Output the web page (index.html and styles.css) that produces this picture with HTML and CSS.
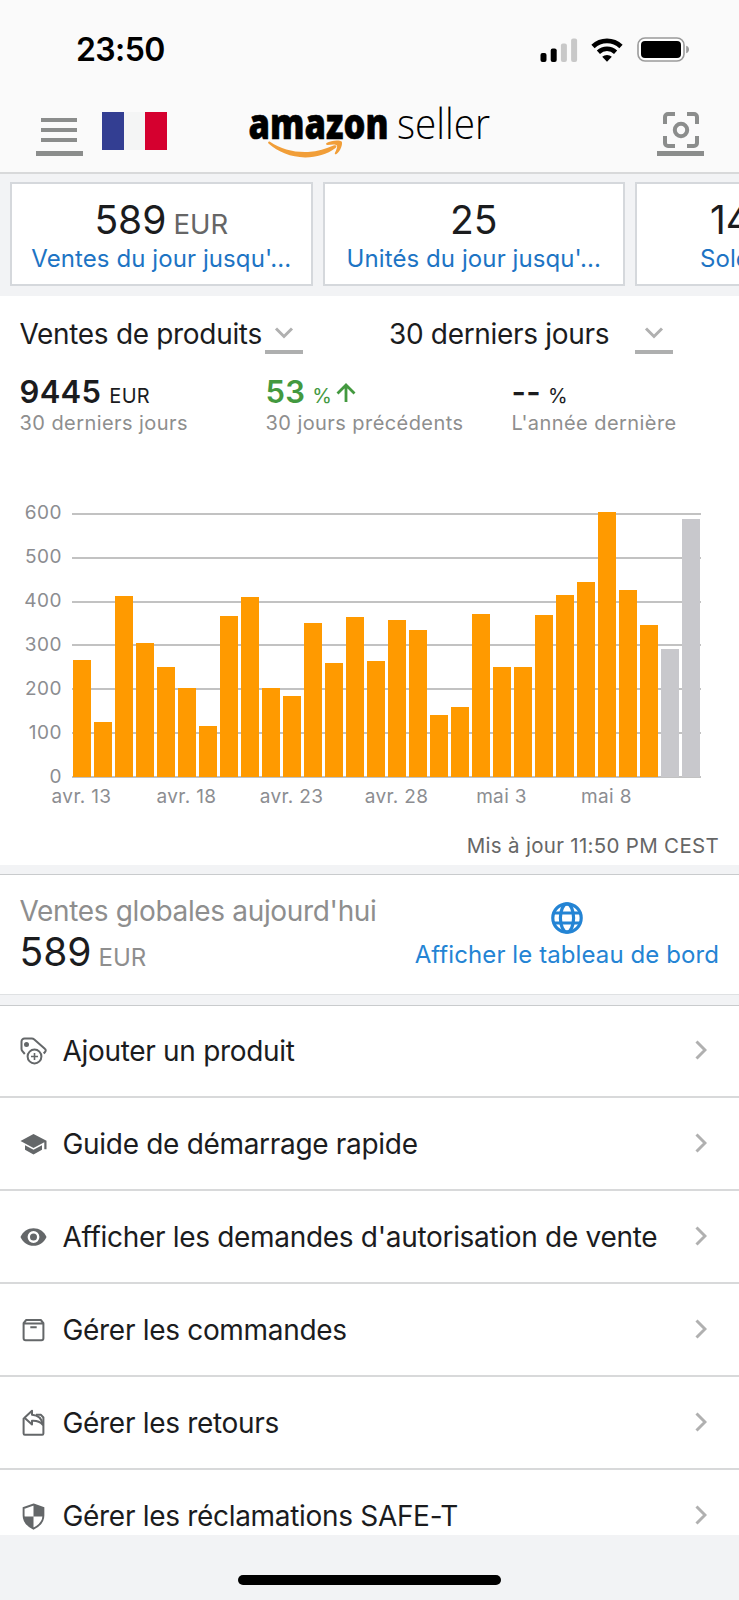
FILE: index.html
```html
<!DOCTYPE html>
<html lang="fr">
<head>
    <meta charset="UTF-8">
    <title>Amazon Seller</title>
    <link rel="stylesheet" href="styles.css">
</head>
<body>
    <div class="status-bar">
        <span class="time">23:50</span>
        <div class="status-icons">
            <svg class="signal" width="38" height="24" viewBox="0 0 38 24">
                <rect x="0.5" y="15" width="6" height="9" rx="2"/>
                <rect x="10.7" y="10.5" width="6" height="13.5" rx="2"/>
                <rect class="off" x="20.9" y="5.5" width="6" height="18.5" rx="2"/>
                <rect class="off" x="31.1" y="0.5" width="6" height="23.5" rx="2"/>
            </svg>
            <svg class="wifi" width="32" height="24" viewBox="0 0 32 24">
                <path d="M2 8.4a20.5 20.5 0 0 1 28 0" fill="none" stroke="#000" stroke-width="4.8"/>
                <path d="M7.4 14.2a12.6 12.6 0 0 1 17.2 0" fill="none" stroke="#000" stroke-width="4.6"/>
                <path d="M16 23.8l-4.8-5a7 7 0 0 1 9.6 0z"/>
            </svg>
            <svg class="battery" width="53" height="25" viewBox="0 0 53 25">
                <rect x="1" y="1" width="46" height="23" rx="7" fill="#fff" stroke="#9b9b9b" stroke-width="1.6"/>
                <rect x="4" y="4" width="40" height="17" rx="4"/>
                <path d="M49.2 8.8c1.8.5 2.8 1.9 2.8 3.7s-1 3.2-2.8 3.7z" fill="#9b9b9b"/>
            </svg>
        </div>
    </div>

    <header class="header">
        <div class="menu">
            <i></i>
            <i></i>
            <i></i>
        </div>
        <div class="flag">
            <i class="blue"></i>
            <i class="white"></i>
            <i class="red"></i>
        </div>
        <svg class="logo" width="244" height="60" viewBox="0 0 244 60">
            <text class="logo-amazon" x="0.5" y="39" textLength="140" lengthAdjust="spacingAndGlyphs">amazon</text>
            <text class="logo-seller" x="149" y="39" textLength="93" lengthAdjust="spacingAndGlyphs">seller</text>
            <path d="M22 41.8C33 49.2 46 52.6 60 52C70 51.4 78 48.8 85.5 45.5C88 44.4 89.5 46.5 87.5 48C79 54.500 68 57.500 57 57.400C43 57.200 30 52 20.500 43.500C19.500 42.500 20.500 40.900 22 41.800Z" fill="#f19e38"/>
            <path d="M78.5 43C83 40 92 39.700 93.700 41.500C95 44 92.500 51 88.500 54C87.300 54.800 86.400 54.200 87 52.800C88.300 50 89.800 46.500 88.800 45.400C87.500 44 83.500 44.500 79.500 45C78.200 45.100 77.600 43.800 78.500 43Z" fill="#f19e38"/>
        </svg>
        <div class="scan">
            <svg width="36" height="36" viewBox="0 0 36 36" fill="none" stroke="#8b8d8c" stroke-width="4">
                <path d="M2 12V5a3 3 0 0 1 3-3h7M24 2h7a3 3 0 0 1 3 3v7M34 24v7a3 3 0 0 1-3 3h-7M12 34H5a3 3 0 0 1-3-3v-7"/>
                <circle cx="18" cy="18" r="6.2"/>
            </svg>
        </div>
    </header>

    <section class="cards">
        <div class="card">
            <p class="card-value">589 <small>EUR</small></p>
            <p class="card-label">Ventes du jour jusqu'...</p>
        </div>
        <div class="card">
            <p class="card-value">25</p>
            <p class="card-label">Unités du jour jusqu'...</p>
        </div>
        <div class="card cut">
            <p class="card-value">14</p>
            <p class="card-label">Solde</p>
        </div>
    </section>

    <section class="sales">
        <div class="selectors">
            <div class="selector">
                <span>Ventes de produits</span>
                <div class="arrow">
                    <svg width="20" height="12" viewBox="0 0 20 12"><path d="M2 1.5l8 8 8-8"/></svg>
                </div>
            </div>
            <div class="selector">
                <span>30 derniers jours</span>
                <div class="arrow">
                    <svg width="20" height="12" viewBox="0 0 20 12"><path d="M2 1.5l8 8 8-8"/></svg>
                </div>
            </div>
        </div>

        <div class="metrics">
            <div class="metric">
                <p class="metric-value">9445 <small>EUR</small></p>
                <p class="metric-label">30 derniers jours</p>
            </div>
            <div class="metric">
                <p class="metric-value up">53 <small>%</small>
                    <svg width="20" height="20" viewBox="0 0 20 20"><path d="M10 19V2M1.5 10.5L10 2l8.5 8.5"/></svg>
                </p>
                <p class="metric-label">30 jours précédents</p>
            </div>
            <div class="metric">
                <p class="metric-value dashes">-- <small>%</small></p>
                <p class="metric-label">L'année dernière</p>
            </div>
        </div>

        <div class="chart">
            <div class="y-axis">
                <span>600</span>
                <span>500</span>
                <span>400</span>
                <span>300</span>
                <span>200</span>
                <span>100</span>
                <span>0</span>
            </div>
            <div class="plot">
                <div class="grid-lines">
                    <i></i><i></i><i></i><i></i><i></i><i></i><i></i>
                </div>
                <div class="bars">
                    <i style="height: 117px"></i>
                    <i style="height: 55px"></i>
                    <i style="height: 181px"></i>
                    <i style="height: 134px"></i>
                    <i style="height: 110px"></i>
                    <i style="height: 89px"></i>
                    <i style="height: 51px"></i>
                    <i style="height: 161px"></i>
                    <i style="height: 180px"></i>
                    <i style="height: 89px"></i>
                    <i style="height: 81px"></i>
                    <i style="height: 154px"></i>
                    <i style="height: 114px"></i>
                    <i style="height: 160px"></i>
                    <i style="height: 116px"></i>
                    <i style="height: 157px"></i>
                    <i style="height: 147px"></i>
                    <i style="height: 62px"></i>
                    <i style="height: 70px"></i>
                    <i style="height: 163px"></i>
                    <i style="height: 110px"></i>
                    <i style="height: 110px"></i>
                    <i style="height: 162px"></i>
                    <i style="height: 182px"></i>
                    <i style="height: 195px"></i>
                    <i style="height: 265px"></i>
                    <i style="height: 187px"></i>
                    <i style="height: 152px"></i>
                    <i class="gray" style="height: 128px"></i>
                    <i class="gray" style="height: 258px"></i>
                </div>
            </div>
            <div class="x-axis">
                <span>avr. 13</span>
                <span>avr. 18</span>
                <span>avr. 23</span>
                <span>avr. 28</span>
                <span>mai 3</span>
                <span>mai 8</span>
            </div>
        </div>
        <p class="updated">Mis à jour 11:50 PM CEST</p>
    </section>

    <section class="global">
        <div>
            <p class="global-label">Ventes globales aujourd'hui</p>
            <p class="global-value">589 <small>EUR</small></p>
        </div>
        <div class="dashboard">
            <svg width="32" height="32" viewBox="0 0 32 32" fill="none" stroke="#2484d4" stroke-width="3.2">
                <circle cx="16" cy="16" r="14.2"/>
                <ellipse cx="16" cy="16" rx="6.6" ry="14.2"/>
                <path d="M3 11h26M3 21h26"/>
            </svg>
            <a>Afficher le tableau de bord</a>
        </div>
    </section>

    <ul class="menu-list">
        <li>
            <svg class="icon" width="28" height="28" viewBox="0 0 28 28" fill="none" stroke="#646769" stroke-width="2">
                <path d="M4.8 17L2.2 13.800a3 3 0 0 1-.7-2V4.500a3 3 0 0 1 3-3h7.300a4 4 0 0 1 2.500.9l10.500 9.400c1.200 1 1.200 2.200.2 3.200l-1.300 1.500"/>
                <circle cx="6.5" cy="7.5" r="1.5" fill="#646769"/>
                <circle cx="14.5" cy="19.5" r="6.9"/>
                <path d="M14.5 16v7M11 19.5h7" stroke-width="1.6"/>
            </svg>
            <span>Ajouter un produit</span>
            <svg class="chevron" width="12" height="20" viewBox="0 0 12 20"><path d="M1.5 1.5L10 10l-8.5 8.5"/></svg>
        </li>
        <li>
            <svg class="icon" width="28" height="28" viewBox="0 0 28 28" fill="#646769">
                <path d="M0.5 11L13.5 4l13 6.8v8.4h-2.2v-7L13.5 18z"/>
                <path d="M5 15.2l8.5 4.6 8.5-4.6v4.5L13.5 24.5 5 19.7z"/>
            </svg>
            <span>Guide de démarrage rapide</span>
            <svg class="chevron" width="12" height="20" viewBox="0 0 12 20"><path d="M1.5 1.5L10 10l-8.5 8.5"/></svg>
        </li>
        <li>
            <svg class="icon" width="28" height="28" viewBox="0 0 28 28" fill="#646769">
                <path d="M0.5 14C3 8.5 7.8 5.2 13.5 5.2S24 8.5 26.5 14C24 19.5 19.2 22.8 13.5 22.8S3 19.5 0.5 14z"/>
                <circle cx="13.5" cy="14" r="4.7" fill="#646769" stroke="#fff" stroke-width="2.4"/>
            </svg>
            <span>Afficher les demandes d'autorisation de vente</span>
            <svg class="chevron" width="12" height="20" viewBox="0 0 12 20"><path d="M1.5 1.5L10 10l-8.5 8.5"/></svg>
        </li>
        <li>
            <svg class="icon" width="28" height="28" viewBox="0 0 28 28" fill="none" stroke="#646769" stroke-width="2" stroke-linejoin="round">
                <path d="M3.6 7.2L6.2 4h14.6l2.6 3.2v15a2 2 0 0 1-2 2H5.6a2 2 0 0 1-2-2zM3.6 7.4h19.8M10.3 11.2h6.4"/>
            </svg>
            <span>Gérer les commandes</span>
            <svg class="chevron" width="12" height="20" viewBox="0 0 12 20"><path d="M1.5 1.5L10 10l-8.5 8.5"/></svg>
        </li>
        <li>
            <svg class="icon" width="28" height="28" viewBox="0 0 28 28" fill="none" stroke="#646769" stroke-width="2" stroke-linejoin="round">
                <path d="M4 9L3.6 9.5v15a1.2 1.2 0 0 0 1.2 1.2h17.4a1.2 1.2 0 0 0 1.2-1.2V8.5L21 5.8h-5"/>
                <path d="M4.5 8.7L12 1.8v4c5.5.3 9.8 3.5 10.8 10-2.8-3.3-6.3-4.3-10.800-4v3.700z"/>
            </svg>
            <span>Gérer les retours</span>
            <svg class="chevron" width="12" height="20" viewBox="0 0 12 20"><path d="M1.5 1.5L10 10l-8.5 8.5"/></svg>
        </li>
        <li>
            <svg class="icon" width="28" height="28" viewBox="0 0 28 28">
                <path d="M13.5 2.5L23.4 6v7.5c0 5.7-4 10.2-9.9 13.1-5.9-2.9-9.9-7.4-9.9-13.1V6z" fill="#fff" stroke="#646769" stroke-width="1.9"/>
                <path d="M13.5 2.5L23.4 6v8.5H13.5zM13.5 14.5v12.1C8 24 4 20 3.6 14.5z" fill="#646769"/>
            </svg>
            <span>Gérer les réclamations SAFE-T</span>
            <svg class="chevron" width="12" height="20" viewBox="0 0 12 20"><path d="M1.5 1.5L10 10l-8.5 8.5"/></svg>
        </li>
    </ul>

    <footer class="home">
        <div class="home-bar"></div>
    </footer>
</body>
</html>
```

FILE: styles.css
```css
* {
    box-sizing: border-box;
}

body {
    margin: 0;
    width: 739px;
    height: 1600px;
    overflow: hidden;
    display: flex;
    flex-direction: column;
    font-family: Inter, "Liberation Sans", sans-serif;
    color: #1b1c1e;
    background-color: #f2f3f5;
}

p,
ul {
    margin: 0;
    padding: 0;
}

svg {
    display: block;
    flex-shrink: 0;
}

small {
    font-weight: 400;
    line-height: 1;
}

/* status bar */
.status-bar {
    height: 99px;
    padding: 0 49px 0 76px;
    display: flex;
    align-items: center;
    justify-content: space-between;
    background-color: #fafafa;
}

.time {
    font-size: 32px;
    font-weight: 600;
    letter-spacing: -0.6px;
    color: #000;
}

.status-icons {
    display: flex;
    align-items: center;
}

.signal .off {
    fill: #c8c8c8;
}

.wifi {
    margin-left: 13px;
}

.battery {
    margin-left: 14px;
}

/* header */
.header {
    height: 75px;
    padding: 0 35px 16px 36px;
    display: flex;
    align-items: flex-end;
    background-color: #fafafa;
    border-bottom: 2px solid #d8d9da;
}

.menu {
    width: 47px;
    height: 38px;
    padding: 0 6px 9px 5px;
    display: flex;
    flex-direction: column;
    gap: 6px;
    border-bottom: 5px solid #8b8d8c;
}

.menu i {
    height: 4px;
    flex-shrink: 0;
    background-color: #8b8d8c;
}

.flag {
    width: 65px;
    height: 38px;
    margin: 0 0 6px 19px;
    display: flex;
}

.flag i {
    flex: 1;
}

.flag .blue {
    background-color: #333e92;
}

.flag .white {
    background-color: #f4f5f5;
}

.flag .red {
    background-color: #d5002f;
}

.logo {
    margin: 0 0 -4px 81px;
    overflow: visible;
}

.logo-amazon {
    font-family: "Open Sans", sans-serif;
    font-size: 42px;
    font-weight: 800;
    stroke: #000;
    stroke-width: 0.6px;
}

.logo-seller {
    font-family: "Open Sans", sans-serif;
    font-size: 43px;
    font-weight: 300;
}

.scan {
    width: 47px;
    height: 44px;
    margin-left: auto;
    padding-left: 6px;
    border-bottom: 5px solid #8b8d8c;
}

/* cards */
.cards {
    height: 122px;
    padding: 8px 0 0 10px;
    display: flex;
    gap: 10px;
    overflow: hidden;
}

.card {
    width: 302.5px;
    height: 104px;
    padding-top: 16px;
    flex-shrink: 0;
    text-align: center;
    white-space: nowrap;
    background-color: #fff;
    border: 2px solid #d5d8dc;
}

.card.cut {
    padding-left: 63px;
    text-align: left;
}

.card.cut .card-value {
    padding-left: 10px;
}

.card-value {
    height: 40px;
    font-size: 39px;
    line-height: 40px;
}

.card-value small {
    font-size: 27.5px;
    margin-left: -4px;
    color: #666;
}

.card-label {
    margin-top: 7px;
    font-size: 24px;
    line-height: 24px;
    letter-spacing: 0.09px;
    color: #1d74c4;
}

/* product sales */
.sales {
    height: 568.5px;
    padding: 18px 20px 0 19px;
    background-color: #fff;
}

.selectors {
    display: grid;
    grid-template-columns: 369.5px 1fr;
}

.selector {
    height: 40px;
    display: grid;
    grid-template-columns: 246px 38px;
    font-size: 28px;
    line-height: 41px;
    letter-spacing: -0.32px;
    white-space: nowrap;
}

.selector span {
    padding-left: 0.5px;
}

.arrow {
    height: 40px;
    padding: 13px 9px 0;
    border-bottom: 4px solid #aeafaf;
}

.arrow path,
.chevron path {
    fill: none;
    stroke: #b0b0b0;
    stroke-width: 3;
}

.metrics {
    margin-top: 22px;
    padding-left: 0.5px;
    display: grid;
    grid-template-columns: 246px 246px 1fr;
}

.metric-value {
    height: 32px;
    display: flex;
    align-items: baseline;
    font-size: 31px;
    font-weight: 600;
    line-height: 32px;
    letter-spacing: 0.3px;
}

.metric-value small {
    margin-left: 8px;
    font-size: 20px;
}

.metric-value.up {
    color: #43993f;
}

.metric-value.up small,
.metric-value.dashes small {
    margin-left: 7px;
}

.metric-value svg {
    margin-left: 4px;
}

.metric-value path {
    fill: none;
    stroke: #43993f;
    stroke-width: 2.8;
}

.metric-label {
    margin: 5px 0 1px;
    font-size: 20px;
    line-height: 20px;
    letter-spacing: 0.43px;
    color: #8e8e8e;
}

/* chart */
.chart {
    margin-top: 69px;
    display: grid;
    grid-template-columns: 53px 629px;
    grid-template-rows: 284px 21px;
    color: #8c8d91;
    font-size: 19px;
    line-height: 20px;
}

.y-axis {
    padding-right: 10px;
    display: flex;
    flex-direction: column;
    justify-content: space-between;
    text-align: right;
    letter-spacing: 0.5px;
}

.plot {
    height: 265px;
    margin-top: 10px;
    display: grid;
    grid-template-rows: 265px;
}

.grid-lines,
.bars {
    grid-area: 1 / 1;
}

.grid-lines {
    display: flex;
    flex-direction: column;
    justify-content: space-between;
}

.grid-lines i {
    height: 2px;
    background-color: #c2c2c2;
}

.bars {
    margin-bottom: 1px;
    padding-left: 1px;
    display: flex;
    align-items: flex-end;
    gap: 3px;
}

.bars i {
    width: 18px;
    background-color: #ff9a00;
}

.bars .gray {
    background-color: #c8c8cc;
}

.x-axis {
    grid-column: 2;
    margin-left: -43px;
    display: flex;
    letter-spacing: 0.35px;
}

.x-axis span {
    width: 105px;
    text-align: center;
}

.updated {
    margin-top: 27px;
    font-size: 20.5px;
    line-height: 22px;
    letter-spacing: 0.3px;
    text-align: right;
    color: #666;
}

/* global sales */
.global {
    height: 121px;
    margin-top: 9.5px;
    padding: 20px 20px 0 19.5px;
    display: flex;
    justify-content: space-between;
    background-color: #fff;
    border-top: 1px solid #c9cbcd;
    border-bottom: 1px solid #dfe1e3;
}

.global-label {
    font-size: 28px;
    line-height: 32px;
    letter-spacing: -0.34px;
    color: #8e8e8e;
}

.global-value {
    height: 40px;
    margin-top: 5px;
    font-size: 39px;
    line-height: 40px;
}

.global-value small {
    margin-left: -4px;
    font-size: 24px;
    color: #8e8e8e;
}

.dashboard {
    padding-top: 7px;
    display: flex;
    flex-direction: column;
    align-items: center;
    color: #2484d4;
    font-size: 24px;
    line-height: 24px;
    letter-spacing: 0.09px;
}

.dashboard a {
    margin-top: 9px;
}

/* menu list */
.menu-list {
    height: 530px;
    margin-top: 10px;
    flex-shrink: 0;
    overflow: hidden;
    list-style: none;
    background-color: #fff;
    border-top: 1px solid #c9cbcd;
}

.menu-list li {
    height: 93px;
    padding: 0 32px 0 20px;
    display: flex;
    align-items: center;
    font-size: 28px;
    letter-spacing: -0.31px;
    white-space: nowrap;
    border-bottom: 2px solid #d8d9da;
}

.menu-list li:first-child {
    height: 92px;
}

.menu-list span {
    margin-left: 14.5px;
}

.chevron {
    margin: 0 0 2px auto;
}

/* home indicator */
.home {
    flex: 1;
    padding-top: 40px;
}

.home-bar {
    width: 263px;
    height: 10px;
    margin: 0 auto;
    border-radius: 5px;
    background-color: #000;
}
```
